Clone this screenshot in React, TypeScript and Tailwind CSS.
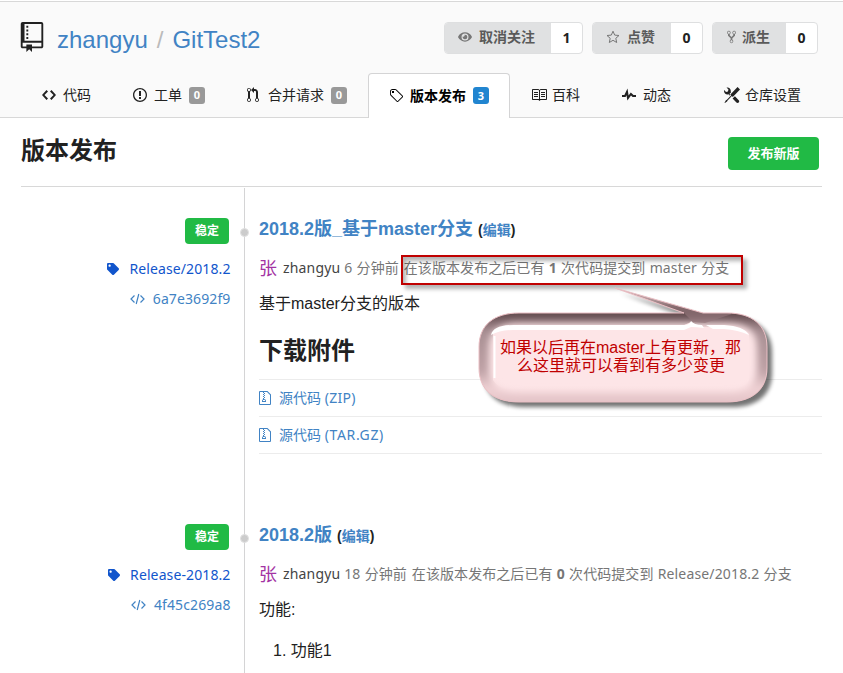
import type { ReactNode } from "react";
import { FaEye, FaTag } from "react-icons/fa";

const paths = {
  repo: "M4 9H3V8h1v1zm0-3H3v1h1V6zm0-2H3v1h1V4zm0-2H3v1h1V2zm8-1v12c0 .55-.45 1-1 1H6v2l-1.5-1.5L3 16v-2H1c-.55 0-1-.45-1-1V1c0-.55.45-1 1-1h10c.55 0 1 .45 1 1zm-1 10H1v2h2v-1h3v1h5v-2zm0-10H2v9h9V1z",
  code: "M9.5 3L8 4.5 11.5 8 8 11.5 9.5 13 14 8 9.5 3zm-5 0L0 8l4.5 5L6 11.5 2.5 8 6 4.5 4.5 3z",
  issue: "M7 2.3c3.14 0 5.7 2.56 5.7 5.7s-2.56 5.7-5.7 5.7A5.71 5.71 0 0 1 1.3 8c0-3.14 2.56-5.7 5.7-5.7zM7 1C3.14 1 0 4.14 0 8s3.14 7 7 7 7-3.14 7-7-3.14-7-7-7zm1 3H6v5h2V4zm0 6H6v2h2v-2z",
  pull: "M11 11.28V5c-.03-.78-.34-1.47-.94-2.06C9.46 2.35 8.78 2.03 8 2H7V0L4 3l3 3V4h1c.27.02.48.11.69.31.21.2.3.42.31.69v6.28A1.993 1.993 0 0 0 10 15a1.993 1.993 0 0 0 1-3.72zm-1 2.92c-.66 0-1.2-.55-1.2-1.2 0-.65.55-1.2 1.2-1.2.65 0 1.2.55 1.2 1.2 0 .65-.55 1.2-1.2 1.2zM4 3c0-1.11-.89-2-2-2a1.993 1.993 0 0 0-1 3.72v6.56A1.993 1.993 0 0 0 2 15a1.993 1.993 0 0 0 1-3.72V4.72c.59-.34 1-.98 1-1.72zm-.8 10c0 .66-.55 1.2-1.2 1.2-.65 0-1.2-.55-1.2-1.2 0-.65.55-1.2 1.2-1.2.65 0 1.2.55 1.2 1.2zM2 4.2C1.34 4.2.8 3.65.8 3c0-.65.55-1.2 1.2-1.2.65 0 1.2.55 1.2 1.2 0 .65-.55 1.2-1.2 1.2z",
  tag: "M7.73 1.73C7.26 1.26 6.62 1 5.96 1H3.5C2.13 1 1 2.13 1 3.5v2.47c0 .66.27 1.3.73 1.77l6.06 6.06c.39.39 1.02.39 1.41 0l4.59-4.59a.996.996 0 0 0 0-1.41L7.73 1.73zM2.38 7.09c-.31-.3-.47-.7-.47-1.13V3.5c0-.88.72-1.59 1.59-1.59h2.47c.42 0 .83.16 1.13.47l6.14 6.13-4.73 4.73-6.13-6.15zM3.01 3h2v2H3V3h.01z",
  book: "M3 5h4v1H3V5zm0 3h4V7H3v1zm0 2h4V9H3v1zm11-5h-4v1h4V5zm0 2h-4v1h4V7zm0 2h-4v1h4V9zm2-6v9c0 .55-.45 1-1 1H9.5l-1 1-1-1H2c-.55 0-1-.45-1-1V3c0-.55.45-1 1-1h5.5l1 1 1-1H15c.55 0 1 .45 1 1zm-8 .5L7.5 3H2v9h6V3.5zm7-.5H9.5l-.5.5V12h6V3z",
  pulse: "M11.5 8L8.8 5.4 6.6 8.5 5.5 1.6 2.38 8H0v2h3.6l.9-1.8.9 5.4L9 8.5l1.6 1.5H14V8h-2.5z",
  tools: "M4.48 7.27c.26.26 1.28 1.33 1.28 1.33l.56-.58-.88-.91 1.69-1.8s-.76-.74-.43-.45c.32-1.19.03-2.51-.87-3.44C4.93.5 3.66.2 2.52.51l1.93 2-.51 1.96-1.89.52-1.93-1.99C-.19 4.17.1 5.48 1 6.4c.94.98 2.29 1.26 3.48.87zm6.44 1.94l-2.33 2.3 3.84 3.98c.31.33.73.49 1.14.49.41 0 .82-.16 1.14-.49.63-.65.63-1.7 0-2.35l-3.79-3.93zM16 2.53L13.55 0 6.33 7.46l.88.91-4.31 4.46-.99.53-1.39 2.27.35.37 2.2-1.44.51-1.02L7.9 9.08l.88.91L16 2.53z",
  zip: "M8.5 1H1a1 1 0 0 0-1 1v12a1 1 0 0 0 1 1h10a1 1 0 0 0 1-1V4.5L8.5 1zM11 14H1V2h3v1h1V2h3l3 3v9zM5 4V3h1v1H5zM4 4h1v1H4V4zm1 2V5h1v1H5zM4 6h1v1H4V6zm1 2V7h1v1H5zM4 9.28A2 2 0 0 0 3 11v1h4v-1a2 2 0 0 0-2-2V8H4v1.28zM6 10v1H4v-1h2z",
  fork: "M8 1a1.993 1.993 0 0 0-1 3.72V6L5 8 3 6V4.72A1.993 1.993 0 0 0 2 1a1.993 1.993 0 0 0-1 3.72V6.5l3 3v1.78A1.993 1.993 0 0 0 5 15a1.993 1.993 0 0 0 1-3.72V9.5l3-3V4.72A1.993 1.993 0 0 0 8 1zM2 4.2C1.34 4.2.8 3.65.8 3c0-.65.55-1.2 1.2-1.2.65 0 1.2.55 1.2 1.2 0 .65-.55 1.2-1.2 1.2zm3 10c-.66 0-1.2-.55-1.2-1.2 0-.65.55-1.2 1.2-1.2.65 0 1.2.55 1.2 1.2 0 .65-.55 1.2-1.2 1.2zm3-10c-.66 0-1.2-.55-1.2-1.2 0-.65.55-1.2 1.2-1.2.65 0 1.2.55 1.2 1.2 0 .65-.55 1.2-1.2 1.2z",
};

function Icon({ name, vw, className }: { name: keyof typeof paths; vw: number; className: string }) {
  return (
    <svg viewBox={`0 0 ${vw} 16`} className={`shrink-0 ${className}`} fill="currentColor">
      <path d={paths[name]} />
    </svg>
  );
}

function StarIcon() {
  return (
    <svg viewBox="0 0 14 14" className="h-3.5 w-3.5 shrink-0" fill="none" stroke="currentColor" strokeWidth="1">
      <path d="M7 1.2 8.7 5.1l4.3.4-3.2 2.8.9 4.2L7 10.3l-3.7 2.2.9-4.2L1 5.5l4.3-.4z" />
    </svg>
  );
}

function CodeIcon() {
  return (
    <svg viewBox="0 0 15 12" className="h-3 w-[15px] shrink-0" fill="none" stroke="currentColor" strokeWidth="1.2">
      <path d="M4.5 2.5 1 6l3.5 3.5M10.5 2.5 14 6l-3.5 3.5M8.8 1 6.2 11" />
    </svg>
  );
}

function ActionButton({ icon, label, count, labelClass }: { icon: ReactNode; label: string; count: number; labelClass: string }) {
  return (
    <div className="flex h-8 overflow-hidden rounded border border-[#dedfe0] bg-white">
      <div className={`flex items-center bg-[#e0e1e2] pb-0.5 pl-[13px] font-bold text-[#5a5a5a] ${labelClass}`}>
        <span className="flex text-[#777]">{icon}</span>
        <span>{label}</span>
      </div>
      <div className="flex w-[31px] items-center justify-center font-['Open_Sans',sans-serif] font-bold text-[#222]">{count}</div>
    </div>
  );
}

function Tab({ className, icon, label, count }: { className: string; icon: ReactNode; label: string; count?: number }) {
  return (
    <div className={`flex h-[45px] shrink-0 items-center pb-px text-[#222] ${className}`}>
      <span className="flex w-[21px] shrink-0">{icon}</span>
      <span>{label}</span>
      {count !== undefined && (
        <span className={`ml-[7px] flex h-[17px] w-4 items-center justify-center rounded-[3px] text-[11px] font-bold text-white ${count ? "bg-[#2185d0]" : "bg-[#999]"}`}>{count}</span>
      )}
    </div>
  );
}

function Release({ tag, sha, title, ago, behind, target, children, className }: { tag: string; sha: string; title: string; ago: string; behind: number; target: string; children: ReactNode; className: string }) {
  return (
    <div className={`flex ${className}`}>
      <div className="flex w-[223px] flex-col items-end pr-[13.5px] pt-[30px]">
        <span className="mr-[1.5px] flex h-[26px] w-11 items-center justify-center rounded bg-[#21ba45] text-xs font-bold text-white">稳定</span>
        <div className="mt-[13px] flex h-6 items-center tracking-[0.11px] text-[#1155cc]">
          <FaTag className="mr-2.5 h-3 w-3" />
          <span>{tag}</span>
        </div>
        <div className="mt-1.5 flex h-6 items-center tracking-[0.11px] text-[#4183c4]">
          <CodeIcon />
          <span className="ml-2">{sha}</span>
        </div>
      </div>
      <div className="relative flex-1 border-l border-[#d4d4d5] pl-3.5">
        <span className="absolute -left-[5px] top-[40px] h-[9px] w-[9px] rounded-full border border-[#e2e2e2] bg-[#ccc]" />
        <div className="mt-[29px] flex h-6 items-center font-['Liberation_Sans','Noto_Sans_CJK_SC',sans-serif] font-bold whitespace-nowrap">
          <span className="text-lg leading-6 text-[#4183c4]">{title}</span>
          <span className="ml-[5px] mt-0.5 text-sm">(<span className="text-[#4183c4]">编辑</span>)</span>
        </div>
        <div className="mt-[15px] flex h-6 items-center tracking-[0.07px] whitespace-nowrap text-[#767676] [word-spacing:0.5px]">
          <span className="mr-1.5 text-lg leading-6 text-[#a333a3]">张</span>
          <span className="mr-1 tracking-[0.15px] text-[#444]">zhangyu</span>
          <span className="mr-[5px]">{ago}</span>
          <span>在该版本发布之后已有 <b>{behind}</b> 次代码提交到 <span className="tracking-[0.15px]">{target}</span> 分支</span>
        </div>
        {children}
      </div>
    </div>
  );
}

function Download({ label, format, className }: { label: string; format: string; className: string }) {
  return (
    <div className="flex h-[37px] items-center border-b border-[#ececec] text-[#4183c4]">
      <Icon name="zip" vw={12} className="mr-2 h-4 w-3" />
      <span>{label} <span className={className}>{format}</span></span>
    </div>
  );
}

function Callout() {
  const shape = "M519 313 H684 L615 288 L703 313 H727 C752 313 767 325 767 347 V368 C767 390 752 402 727 402 H519 C494 402 479 390 479 368 V347 C479 325 494 313 519 313Z";
  return (
    <div className="absolute left-[470px] top-[280px] h-[135px] w-[310px]">
      <svg viewBox="470 280 310 135" className="absolute inset-0 h-full w-full">
        <defs>
          <linearGradient id="bevel" x1="0" y1="313" x2="0" y2="402" gradientUnits="userSpaceOnUse">
            <stop offset="0" stopColor="#5e464a" />
            <stop offset=".2" stopColor="#a88f93" />
            <stop offset=".65" stopColor="#bfa2a6" />
            <stop offset=".85" stopColor="#f0d2d5" />
            <stop offset="1" stopColor="#e3c3c7" />
          </linearGradient>
          <linearGradient id="panel" x1="0" y1="326" x2="0" y2="390" gradientUnits="userSpaceOnUse">
            <stop offset=".8" stopColor="#fde5e7" />
            <stop offset="1" stopColor="#fde5e7" stopOpacity="0" />
          </linearGradient>
          <filter id="soft" x="-20%" y="-20%" width="140%" height="140%"><feGaussianBlur stdDeviation="3.5" /></filter>
          <filter id="shade" x="-20%" y="-20%" width="140%" height="140%"><feGaussianBlur stdDeviation="2" /></filter>
          <clipPath id="bubble"><path d={shape} /></clipPath>
        </defs>
        <path d={shape} fill="#000" opacity=".55" filter="url(#shade)" transform="translate(5 5)" />
        <path d={shape} fill="#fde5e7" />
        <g clipPath="url(#bubble)">
          <path d="M519 313 H727 C752 313 767 325 767 347 V368 C767 390 752 402 727 402 H519 C494 402 479 390 479 368 V347 C479 325 494 313 519 313Z" fill="none" stroke="url(#bevel)" strokeWidth="20" filter="url(#soft)" />
          <path d="M684 313 L615 288 L735 313 L705 323 L693 322Z" fill="#93767b" opacity=".65" />
        </g>
        <path d="M493 333 Q497 326 512 326 H682 L691 322 L700 327 H730 Q745 328 749 334 V380 Q744 390 725 390 H514 Q499 390 493 380Z" fill="url(#panel)" />
        <path d="M494.5 378 V336" fill="none" stroke="#fff" strokeWidth="2" />
        <path d="M491 335 Q493 325 514 325 H684 Q690 325 691 321 Q694 325 702 325 L704 328 Q696 327 691 327 L684 330 H513 Q500 330 491 335Z M706 325 H724 Q744 326 749 335 Q738 330 724 329 H713Z" fill="#fff" />
        <path d={shape} fill="none" stroke="#eabfc4" strokeWidth="1" />
      </svg>
      <div className="relative pl-5 pt-[59px] font-['Liberation_Sans','Noto_Sans_CJK_SC',sans-serif] text-base leading-[18px] whitespace-nowrap text-[#c00000]">
        <div className="pl-[10px]">如果以后再在master上有更新，那</div>
        <div className="pl-[27px]">么这里就可以看到有多少变更</div>
      </div>
    </div>
  );
}

export default function App() {
  return (
    <div className="relative h-[673px] w-[843px] overflow-hidden bg-white font-['Noto_Sans','Noto_Sans_CJK_SC',sans-serif] text-sm leading-5 text-[#212121]">
      <div className="mt-px h-[117px] border-y border-[#d8d8d8] bg-[#fafafa]">
        <div className="flex h-[71px] items-start pl-[21px] pr-[25px] pt-5">
          <Icon name="repo" vw={12} className="-ml-px h-[30px] w-6" />
          <div className="ml-[13px] mt-0.5 flex font-['Liberation_Sans',sans-serif] text-2xl leading-8 text-[#4183c4]">
            <span>zhangyu</span>
            <span className="mx-[9px] text-[#bbb]">/</span>
            <span>GitTest2</span>
          </div>
          <div className="ml-auto flex gap-[9px]">
            <ActionButton icon={<FaEye className="mr-[7px] h-3.5 w-3.5" />} label="取消关注" count={1} labelClass="w-[106px]" />
            <ActionButton icon={<span className="mr-[7px]"><StarIcon /></span>} label="点赞" count={0} labelClass="w-[78px]" />
            <ActionButton icon={<Icon name="fork" vw={10} className="ml-px mr-1.5 h-3.5 w-[9px]" />} label="派生" count={0} labelClass="w-[73px]" />
          </div>
        </div>
        <div className="flex pl-[21px]">
          <Tab className="w-[91px] pl-[21px]" icon={<Icon name="code" vw={14} className="h-4 w-3.5" />} label="代码" />
          <Tab className="w-[114px] pl-[21px]" icon={<Icon name="issue" vw={14} className="h-4 w-3.5" />} label="工单" count={0} />
          <Tab className="w-[142px] pl-[21px]" icon={<Icon name="pull" vw={12} className="h-4 w-3" />} label="合并请求" count={0} />
          <Tab className="w-[142px] rounded-t border border-b-0 border-[#d4d4d5] bg-white pl-5 font-bold text-black" icon={<Icon name="tag" vw={14} className="h-4 w-3.5" />} label="版本发布" count={3} />
          <Tab className="w-[91px] pl-[21px]" icon={<Icon name="book" vw={16} className="h-4 w-4" />} label="百科" />
          <Tab className="w-[102px] pl-[21px]" icon={<Icon name="pulse" vw={14} className="h-4 w-3.5" />} label="动态" />
          <Tab className="w-[119px] pl-[21px]" icon={<Icon name="tools" vw={16} className="h-4 w-4" />} label="仓库设置" />
        </div>
      </div>
      <div className="ml-[21px] flex h-[69px] w-[801px] items-start justify-between border-b border-[#d8d8d8] pr-[3px]">
        <h1 className="mt-4 text-2xl leading-8 font-bold">版本发布</h1>
        <button className="mt-[19px] h-[33px] w-[91px] rounded bg-[#21ba45] pb-0.5 text-[13px] font-bold text-white">发布新版</button>
      </div>
      <div className="ml-[21px] mt-px w-[801px]">
        <Release className="h-[306px]" tag="Release/2018.2" sha="6a7e3692f9" title="2018.2版_基于master分支" ago="6 分钟前" behind={1} target="master">
          <p className="mt-3 font-['Liberation_Sans','Noto_Sans_CJK_SC',sans-serif] text-base leading-6">基于master分支的版本</p>
          <h2 className="mt-[18px] text-2xl leading-8 font-bold">下载附件</h2>
          <div className="mt-[13px] border-t border-[#ececec]">
            <Download label="源代码" format="(ZIP)" className="tracking-[0.3px]" />
            <Download label="源代码" format="(TAR.GZ)" className="tracking-[0.65px]" />
          </div>
        </Release>
        <Release className="h-[180px]" tag="Release-2018.2" sha="4f45c269a8" title="2018.2版" ago="18 分钟前" behind={0} target="Release/2018.2">
          <div className="font-['Liberation_Sans','Noto_Sans_CJK_SC',sans-serif] text-base leading-6">
            <p className="mt-3">功能:</p>
            <ol className="mt-[17px] list-inside list-decimal pl-3.5"><li>功能1</li></ol>
          </div>
        </Release>
      </div>
      <div className="absolute left-[401px] top-[255px] h-[30px] w-[342px] border-2 border-[#c00000] shadow-[4px_4px_4px_rgba(0,0,0,0.3),inset_3px_4px_4px_rgba(0,0,0,0.3)]" />
      <Callout />
    </div>
  );
}
